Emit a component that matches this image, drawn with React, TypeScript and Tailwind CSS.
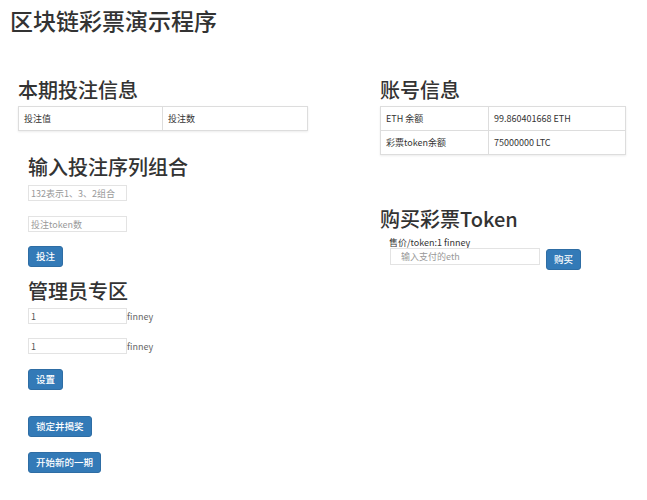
import React from "react";

const font = { fontFamily: '"Noto Sans CJK SC", "Noto Sans", sans-serif' };

function Btn({ children }: { children: React.ReactNode }) {
  return (
    <button className="h-[21px] px-[7px] rounded-[3px] bg-[#337ab7] border border-[#2e6da4] text-white text-[9.5px] font-medium leading-none">
      {children}
    </button>
  );
}

function Field({ value, placeholder }: { value?: string; placeholder?: string }) {
  return (
    <input
      readOnly
      defaultValue={value}
      placeholder={placeholder}
      className="block w-[99px] h-[16px] px-[2px] border border-[#e3e3e3] text-[9px] text-[#555] placeholder:text-[#999] outline-none"
    />
  );
}

export default function App() {
  return (
    <div className="w-[647px] h-[500px] bg-white text-[#333] overflow-hidden" style={font}>
      <h1 className="pl-[10px] pt-[6px] text-[23px] leading-[28px] font-medium">区块链彩票演示程序</h1>

      <div className="flex mt-[44px]">
        {/* left column */}
        <div className="ml-[18px] w-[290px]">
          <h2 className="text-[20px] leading-[24px] font-medium">本期投注信息</h2>
          <table className="mt-[4px] w-full border border-[#ddd] shadow-[0_1px_2px_rgba(0,0,0,0.08)] text-[9px] text-[#333]">
            <tbody>
              <tr className="h-[24px]">
                <td className="w-[144px] px-[5px] border-r border-[#ddd]">投注值</td>
                <td className="px-[5px]">投注数</td>
              </tr>
            </tbody>
          </table>

          <div className="ml-[10px] flex flex-col items-start">
            <h2 className="mt-[24px] text-[20px] leading-[24px] font-medium">输入投注序列组合</h2>
            <div className="mt-[6px]">
              <Field placeholder="132表示1、3、2组合" />
            </div>
            <div className="mt-[15px]">
              <Field placeholder="投注token数" />
            </div>
            <div className="mt-[14px] flex">
              <Btn>投注</Btn>
            </div>

            <h2 className="mt-[12px] text-[20px] leading-[24px] font-medium">管理员专区</h2>
            <div className="mt-[5px] flex items-center">
              <Field value="1" />
              <span className="text-[9px] leading-none text-[#666]">finney</span>
            </div>
            <div className="mt-[14px] flex items-center">
              <Field value="1" />
              <span className="text-[9px] leading-none text-[#666]">finney</span>
            </div>
            <div className="mt-[15px] flex">
              <Btn>设置</Btn>
            </div>
            <div className="mt-[26px] flex">
              <Btn>锁定并揭奖</Btn>
            </div>
            <div className="mt-[15px] flex">
              <Btn>开始新的一期</Btn>
            </div>
          </div>
        </div>

        {/* right column */}
        <div className="ml-[72px] w-[246px]">
          <h2 className="text-[20px] leading-[24px] font-medium">账号信息</h2>
          <table className="mt-[4px] w-full border border-[#ddd] shadow-[0_1px_2px_rgba(0,0,0,0.08)] text-[9px] text-[#333]">
            <tbody>
              <tr className="h-[24px] border-b border-[#ddd]">
                <td className="w-[108px] px-[5px] border-r border-[#ddd]">ETH 余额</td>
                <td className="px-[5px]">99.860401668 ETH</td>
              </tr>
              <tr className="h-[24px]">
                <td className="px-[5px] border-r border-[#ddd]">彩票token余额</td>
                <td className="px-[5px]">75000000 LTC</td>
              </tr>
            </tbody>
          </table>

          <h2 className="mt-[52px] text-[20px] leading-[24px] font-medium">购买彩票Token</h2>
          <div className="ml-[9px] mt-[6px] text-[9px] leading-[11px]">售价/token:1 finney</div>
          <div className="ml-[10px] flex items-start gap-[6px]">
            <input
              readOnly
              placeholder="输入支付的eth"
              className="block w-[150px] h-[17px] px-[10px] border border-[#e3e3e3] text-[9px] placeholder:text-[#999] outline-none"
            />
            <div className="mt-[1px] flex">
              <Btn>购买</Btn>
            </div>
          </div>
        </div>
      </div>
    </div>
  );
}
